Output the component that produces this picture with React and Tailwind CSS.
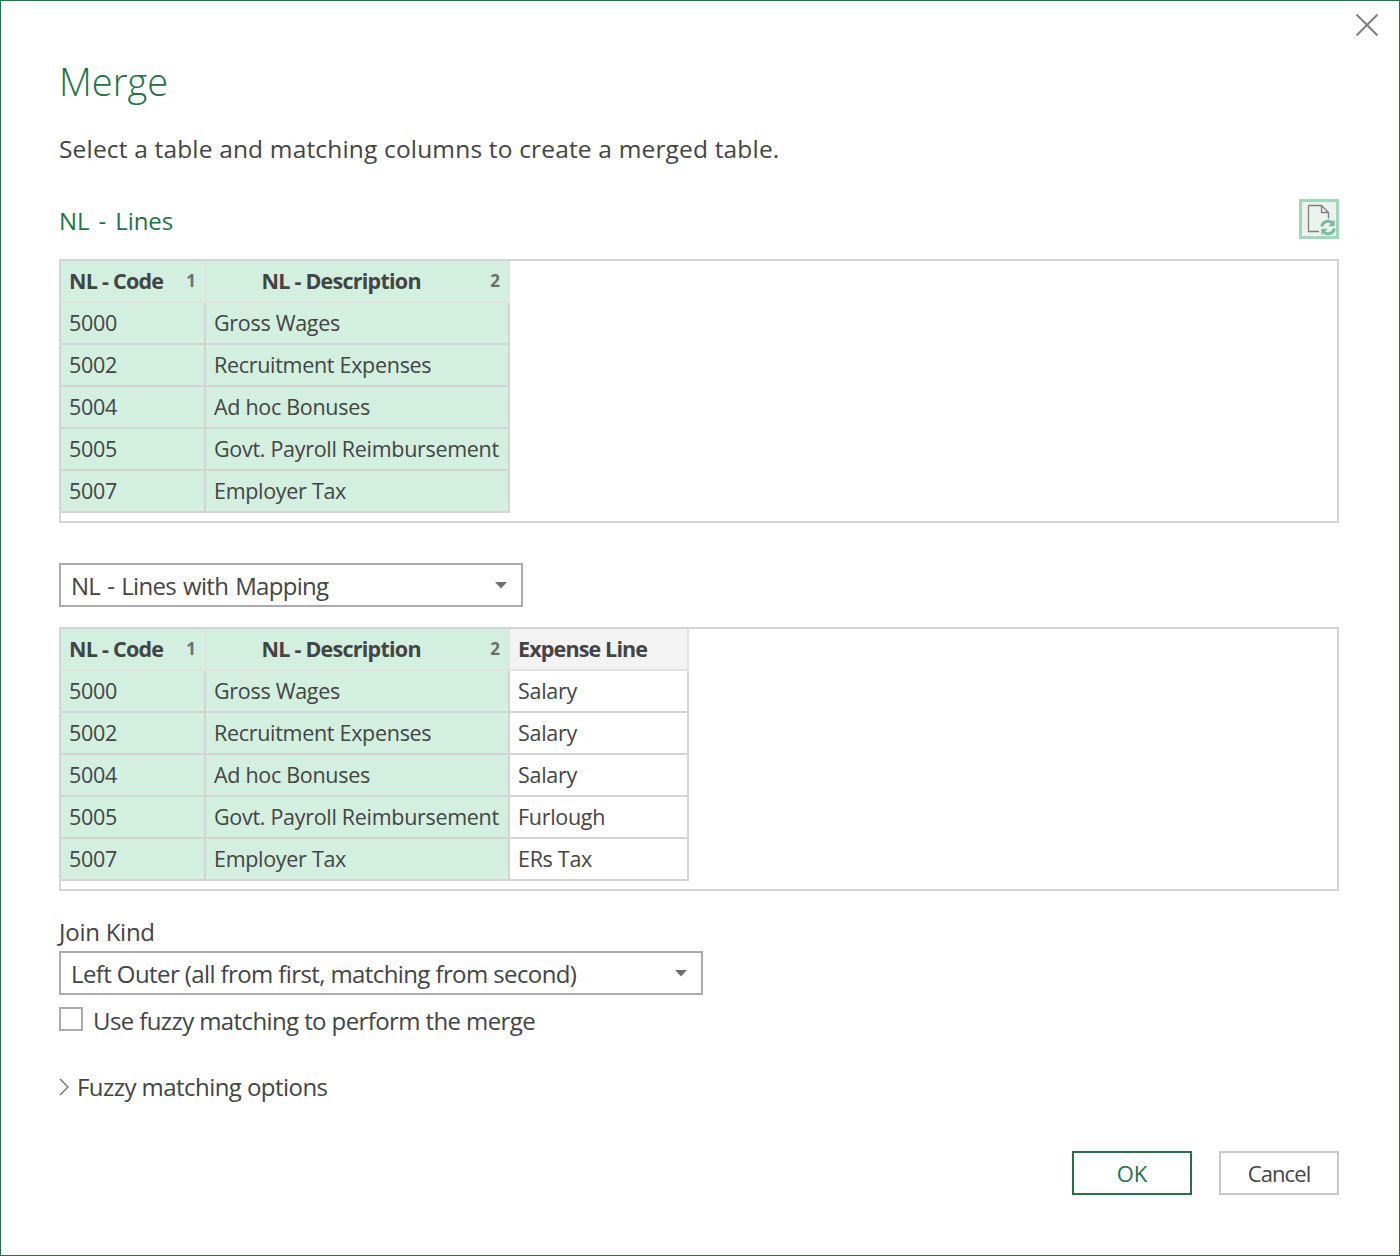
import React from "react";

const rows = [
  ["5000", "Gross Wages", "Salary"],
  ["5002", "Recruitment Expenses", "Salary"],
  ["5004", "Ad hoc Bonuses", "Salary"],
  ["5005", "Govt. Payroll Reimbursement", "Furlough"],
  ["5007", "Employer Tax", "ERs Tax"],
];

const HeaderCell = ({ label, num, center }) => (
  <div className="h-[42px] flex items-center pl-[8px] pr-[8px] bg-[#d3efe0] border-r-2 border-b-2 border-[#e2e2e2]">
    <span className={`text-[21.5px] font-bold text-[#444444] tracking-[-0.75px] ${center ? "flex-1 text-center pr-[22px]" : "flex-1"}`}>
      {label}
    </span>
    <span className="text-[17px] font-bold text-[#6e6e6e]">{num}</span>
  </div>
);

const BodyCell = ({ children, selected }) => (
  <div
    className={`h-[42px] flex items-center pl-[8px] pt-[1px] text-[21.5px] text-[#444444] tracking-[-0.3px] whitespace-nowrap border-r-2 border-b-2 border-[#d4d4d4] ${
      selected ? "bg-[#d3efe0]" : "bg-white"
    }`}
  >
    {children}
  </div>
);

const Preview = ({ extra }) => (
  <div className="h-[264px] border-2 border-[#d4d4d4] bg-white">
    <div className={`grid ${extra ? "w-[628px] grid-cols-[145px_304px_179px]" : "w-[449px] grid-cols-[145px_304px]"}`}>
      <HeaderCell label="NL - Code" num="1" />
      <HeaderCell label="NL - Description" num="2" center />
      {extra && (
        <div className="h-[42px] flex items-center pl-[8px] bg-[#f3f3f3] border-b-2 border-r-2 border-[#e2e2e2] text-[21.5px] font-bold text-[#444444] tracking-[-0.85px]">
          Expense Line
        </div>
      )}
      {rows.map((r) => (
        <React.Fragment key={r[0]}>
          <BodyCell selected>{r[0]}</BodyCell>
          <BodyCell selected>{r[1]}</BodyCell>
          {extra && <BodyCell>{r[2]}</BodyCell>}
        </React.Fragment>
      ))}
    </div>
  </div>
);

const Caret = () => (
  <svg width="12" height="7" viewBox="0 0 12 7" className="shrink-0">
    <path d="M0 0H12L6 6.5Z" fill="#6e6e6e" />
  </svg>
);

const Select = ({ width, tracking, children }) => (
  <div className={`${width} ${tracking} h-[44px] border-2 border-[#ababab] flex items-center justify-between pl-[10px] pr-[14px] text-[24px] text-[#444444] whitespace-nowrap`}>
    <span className="mt-[2px]">{children}</span>
    <Caret />
  </div>
);

const RefreshFileIcon = () => (
  <div className="w-[40px] h-[40px] border-[3px] border-[#9fd8bb] bg-[#ebf3ef] flex items-center justify-center">
    <svg width="34" height="34" viewBox="0 0 34 34">
      <path d="M6.5 3.5H19.5L26.5 10.5V20M26.5 10.5H19.5V3.5M6.5 3.5V29.5H17" fill="none" stroke="#7f7f7f" strokeWidth="1.3" />
      <circle cx="26" cy="25.5" r="9" fill="#ebf3ef" />
      <path d="M19.6 24.5A6.5 6.5 0 0 1 30.6 21.2" fill="none" stroke="#7fb99c" strokeWidth="3" />
      <path d="M32.6 17.8V24.3H26.2Z" fill="#7fb99c" />
      <path d="M32.4 26.5A6.5 6.5 0 0 1 21.4 29.8" fill="none" stroke="#7fb99c" strokeWidth="3" />
      <path d="M19.4 33.2V26.7H25.8Z" fill="#7fb99c" />
    </svg>
  </div>
);

export default function App() {
  return (
    <div className="relative w-[1400px] h-[1256px] bg-white border border-[#217346] font-['Open_Sans',sans-serif] text-[#444444] overflow-hidden">
      <button className="absolute right-[20px] top-[12px]">
        <svg width="24" height="24" viewBox="0 0 24 24">
          <path d="M1.5 1.5L22.5 22.5M22.5 1.5L1.5 22.5" stroke="#7f7f7f" strokeWidth="2" />
        </svg>
      </button>

      <div className="pl-[58px] pr-[60px] pt-[54px]">
        <h1 className="text-[38px] leading-[52px] font-light text-[#217346] tracking-[0px]">Merge</h1>
        <p className="mt-[25px] text-[24.5px] leading-[34px] tracking-[0.17px]">
          Select a table and matching columns to create a merged table.
        </p>

        <div className="mt-[33px] h-[40px] flex items-center justify-between">
          <span className="text-[24px] text-[#217346] tracking-[-0.1px] [word-spacing:3px] mt-[4px]">NL - Lines</span>
          <RefreshFileIcon />
        </div>

        <div className="mt-[20px]">
          <Preview />
        </div>

        <div className="mt-[40px]">
          <Select width="w-[464px]" tracking="tracking-[-0.7px] [word-spacing:1.5px]">NL - Lines with Mapping</Select>
        </div>

        <div className="mt-[20px]">
          <Preview extra />
        </div>

        <div className="mt-[23px] mb-[2px] text-[24px] leading-[35px] tracking-[-0.25px]">Join Kind</div>
        <Select width="w-[644px]" tracking="tracking-[-0.6px]">Left Outer (all from first, matching from second)</Select>

        <div className="mt-[8px] flex items-center gap-[10px]">
          <div className="w-[24px] h-[24px] border-2 border-[#ababab] bg-white" />
          <span className="text-[24px] leading-[28px] tracking-[-0.6px] mt-[4px]">Use fuzzy matching to perform the merge</span>
        </div>

        <div className="mt-[35px] flex items-center gap-[8px]">
          <svg width="10" height="18" viewBox="0 0 10 18">
            <path d="M1 1L9 9L1 17" fill="none" stroke="#6e6e6e" strokeWidth="1.3" />
          </svg>
          <span className="text-[24px] leading-[34px] tracking-[-0.55px]">Fuzzy matching options</span>
        </div>

        <div className="mt-[47px] flex justify-end gap-[27px]">
          <button className="w-[120px] h-[44px] border-2 border-[#217346] text-[#217346] text-[22px] flex items-center justify-center">
            OK
          </button>
          <button className="w-[120px] h-[44px] border-2 border-[#c8c8c8] text-[#444444] text-[22px] tracking-[-0.9px] flex items-center justify-center">
            Cancel
          </button>
        </div>
      </div>
    </div>
  );
}
